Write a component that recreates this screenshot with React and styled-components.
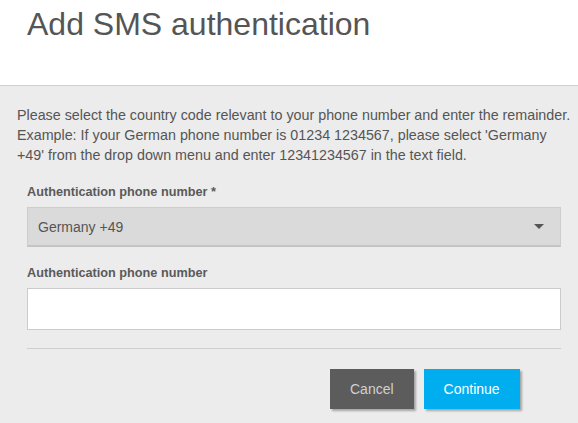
import React from "react";
import styled, { createGlobalStyle } from "styled-components";

const Global = createGlobalStyle`
  html, body { margin: 0; padding: 0; }
  body {
    background: #ececec;
    font-family: "Liberation Sans", Arial, sans-serif;
    color: #555;
  }
  * { box-sizing: border-box; }
`;

const Page = styled.div`
  width: 578px;
  height: 423px;
  background: #ececec;
  overflow: hidden;
`;

const Header = styled.header`
  height: 86px;
  background: #fff;
  border-bottom: 1px solid #cfcfcf;
  padding: 6px 0 0 27px;
`;

const Title = styled.h1`
  margin: 0;
  font-size: 32px;
  font-weight: normal;
  line-height: 37px;
  color: #555;
`;

const Body = styled.main`
  padding: 19px 7px 0 17px;
`;

const Intro = styled.p`
  margin: 0;
  font-size: 14.3px;
  line-height: 20px;
  color: #555;
`;

const Form = styled.form`
  margin: 20px 10px 0;
  display: flex;
  flex-direction: column;
`;

const Field = styled.div`
  display: flex;
  flex-direction: column;
  gap: 7px;
  margin-bottom: ${(p) => p.$mb || 0}px;
`;

const Label = styled.label`
  font-size: 12.7px;
  font-weight: bold;
  line-height: 15px;
  color: #5a5a5a;
`;

const Select = styled.div`
  height: 40px;
  background: #dadada;
  border: 1px solid #cdcdcd;
  border-bottom: 2px solid #c4c4c4;
  display: flex;
  align-items: center;
  justify-content: space-between;
  padding: 0 16px 0 10px;
  font-size: 14px;
  color: #555;
`;

const Arrow = styled.span`
  width: 0;
  height: 0;
  border-left: 5px solid transparent;
  border-right: 5px solid transparent;
  border-top: 5px solid #555;
`;

const Input = styled.input`
  height: 42px;
  background: #fff;
  border: 1px solid #cbcbcb;
  padding: 0 10px;
  font-size: 14px;
  font-family: inherit;
  outline: none;
`;

const Divider = styled.hr`
  margin: 18px 0 20px;
  border: 0;
  border-top: 1px solid #cfcfcf;
  height: 0;
`;

const Actions = styled.div`
  display: flex;
  gap: 10px;
  padding-left: 303px;
`;

const Button = styled.button`
  height: 40px;
  padding: 0 20px;
  border: 0;
  font-family: inherit;
  font-size: 14px;
  cursor: pointer;
  background: ${(p) => (p.$primary ? "#00aeef" : "#5c5c5c")};
  color: ${(p) => (p.$primary ? "#fff" : "#d0d0d0")};
  box-shadow: 2px 2px 2px rgba(0, 0, 0, 0.3);
`;

export default function App() {
  return (
    <Page>
      <Global />
      <Header>
        <Title>Add SMS authentication</Title>
      </Header>
      <Body>
        <Intro>
          Please select the country code relevant to your phone number and enter the remainder.
          Example: If your German phone number is 01234 1234567, please select 'Germany +49'
          from the drop down menu and enter 12341234567 in the text field.
        </Intro>
        <Form onSubmit={(e) => e.preventDefault()}>
          <Field $mb={19}>
            <Label>Authentication phone number *</Label>
            <Select>
              <span>Germany +49</span>
              <Arrow />
            </Select>
          </Field>
          <Field>
            <Label>Authentication phone number</Label>
            <Input type="text" />
          </Field>
          <Divider />
          <Actions>
            <Button type="button">Cancel</Button>
            <Button type="button" $primary>Continue</Button>
          </Actions>
        </Form>
      </Body>
    </Page>
  );
}
